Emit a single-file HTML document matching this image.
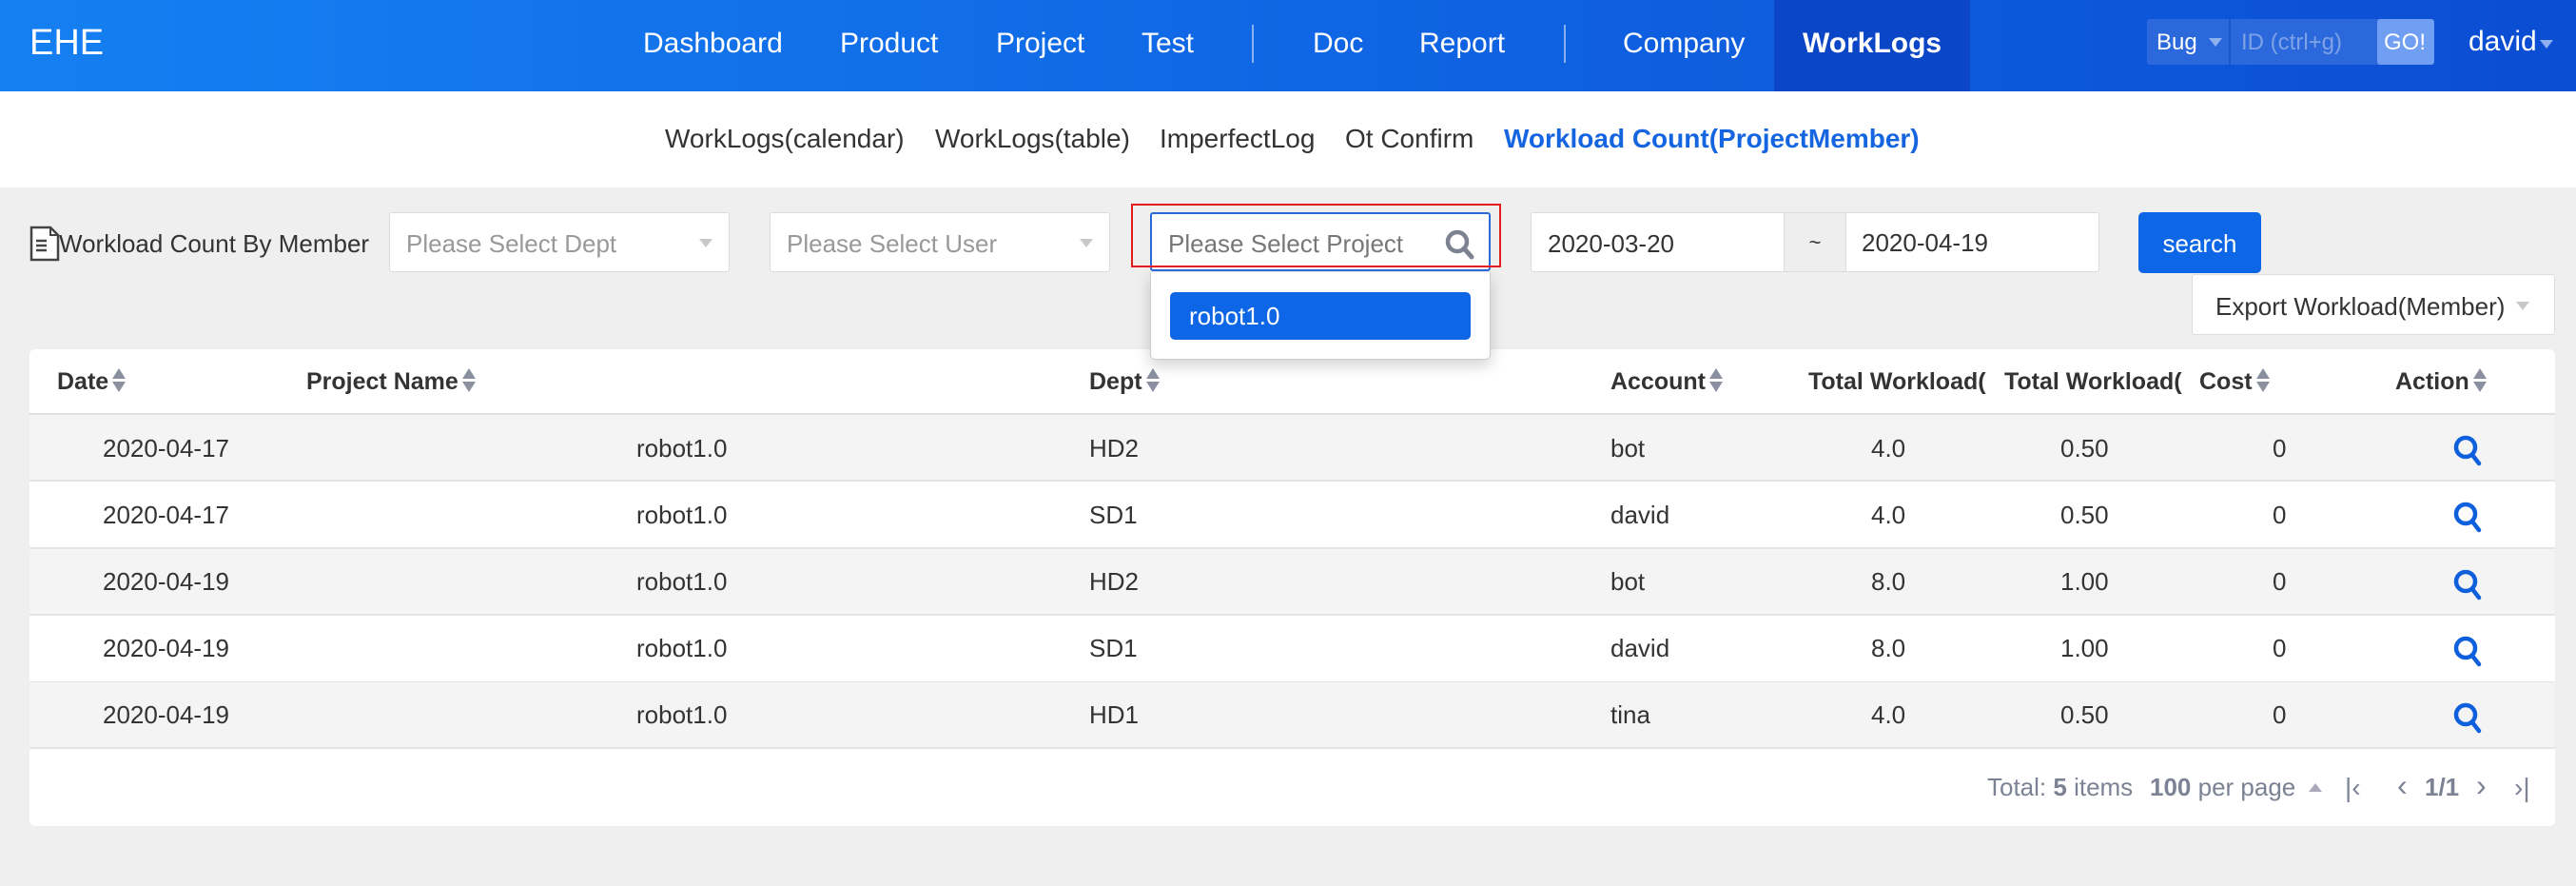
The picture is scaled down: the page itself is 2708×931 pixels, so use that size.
<!DOCTYPE html>
<html><head><meta charset="utf-8"><style>
*{margin:0;padding:0;box-sizing:border-box}
body{width:2708px;height:931px;background:#efefef;font-family:"Liberation Sans",Arial,sans-serif;position:relative;overflow:hidden;color:#333}
.a{position:absolute;white-space:nowrap}
.hdr{left:0;top:0;width:2708px;height:96px;background:linear-gradient(90deg,#1580f2 0%,#1069e6 45%,#0b4dd3 100%)}
.nav{color:#fff;font-size:30px;top:29px}
.sub{font-size:28px;color:#333;top:130px}
.sel{background:#fff;border:1px solid #dcdcdc;border-radius:3px;height:63px;top:223px;font-size:26px;color:#999;padding:17px 0 0 17px}
.caret{position:absolute;width:0;height:0;border-left:7px solid transparent;border-right:7px solid transparent;border-top:9px solid #c8c8c8}
.th{font-size:25px;font-weight:bold;color:#333;top:387px}
.td{font-size:26px;color:#333}
.sort{display:inline-block;vertical-align:middle;margin-left:3px;width:16px;height:26px;position:relative;top:-2px}
.sort:before{content:"";position:absolute;left:1px;top:0;border-left:7px solid transparent;border-right:7px solid transparent;border-bottom:11px solid #8a90a0}
.sort:after{content:"";position:absolute;left:1px;top:14px;border-left:7px solid transparent;border-right:7px solid transparent;border-top:11px solid #8a90a0}
.row{left:31px;width:2655px;height:70px;border-bottom:2px solid #e4e4e4}
.pg{font-size:26px;color:#7b8294;top:812px}
</style></head><body>
<div class="a hdr"></div>
<div class="a" style="left:1865px;top:0;width:206px;height:96px;background:#0b46c6"></div>
<div class="a" style="left:31px;top:24px;color:#fff;font-size:38px">EHE</div>
<div class="a nav" style="left:676px">Dashboard</div>
<div class="a nav" style="left:883px">Product</div>
<div class="a nav" style="left:1047px">Project</div>
<div class="a nav" style="left:1200px">Test</div>
<div class="a" style="left:1316px;top:26px;width:2px;height:40px;background:rgba(255,255,255,.5)"></div>
<div class="a nav" style="left:1380px">Doc</div>
<div class="a nav" style="left:1492px">Report</div>
<div class="a" style="left:1644px;top:26px;width:2px;height:40px;background:rgba(255,255,255,.5)"></div>
<div class="a nav" style="left:1706px">Company</div>
<div class="a nav" style="left:1895px;font-weight:bold">WorkLogs</div>
<div class="a" style="left:2257px;top:20px;width:302px;height:48px;background:#2a68db;border-radius:3px"></div>
<div class="a" style="left:2343px;top:20px;width:2px;height:48px;background:#1a55cc"></div>
<div class="a" style="left:2499px;top:20px;width:60px;height:48px;background:#6f9ef2;border-radius:3px"></div>
<div class="a" style="left:2267px;top:31px;color:#fff;font-size:24px">Bug</div>
<div class="caret" style="left:2322px;top:40px;border-top-color:#8fb0ee"></div>
<div class="a" style="left:2356px;top:31px;color:#7ea2e6;font-size:24px">ID (ctrl+g)</div>
<div class="a" style="left:2506px;top:31px;color:#fff;font-size:24px">GO!</div>
<div class="a" style="left:2595px;top:27px;color:#fff;font-size:30px">david</div>
<div class="caret" style="left:2670px;top:42px;border-top-color:#8fb0ee"></div>
<div class="a" style="left:0;top:96px;width:2708px;height:101px;background:#fff"></div>
<div class="a sub" style="left:699px">WorkLogs(calendar)</div>
<div class="a sub" style="left:983px">WorkLogs(table)</div>
<div class="a sub" style="left:1219px">ImperfectLog</div>
<div class="a sub" style="left:1414px">Ot Confirm</div>
<div class="a sub" style="left:1581px;color:#1565e0;font-weight:bold">Workload Count(ProjectMember)</div>
<svg class="a" style="left:31px;top:237px" width="32" height="38" viewBox="0 0 32 38"><path d="M2 2h20l8 8v26H2z" fill="#fff" stroke="#444" stroke-width="2.5"/><path d="M22 2v8h8" fill="none" stroke="#444" stroke-width="2"/><path d="M7 16h11M7 21h11M7 26h11" stroke="#444" stroke-width="2.5"/></svg>
<div class="a" style="left:62px;top:241px;font-size:26px;color:#333">Workload Count By Member</div>
<div class="a sel" style="left:409px;width:358px">Please Select Dept<div class="caret" style="left:325px;top:27px"></div></div>
<div class="a sel" style="left:809px;width:358px">Please Select User<div class="caret" style="left:325px;top:27px"></div></div>
<div class="a sel" style="left:1609px;width:598px;color:#333">2020-03-20</div>
<div class="a" style="left:1875px;top:224px;width:66px;height:61px;background:#eee;border-left:1px solid #ddd;border-right:1px solid #ddd;font-size:22px;text-align:center;padding-top:18px">~</div>
<div class="a" style="left:1957px;top:240px;font-size:26px">2020-04-19</div>
<div class="a" style="left:2248px;top:223px;width:129px;height:64px;background:#0d66e6;border-radius:5px;color:#fff;font-size:26px;text-align:center;padding-top:18px">search</div>
<div class="a" style="left:2304px;top:288px;width:382px;height:64px;background:#fff;border:1px solid #ddd;border-radius:3px;font-size:26px;color:#333;padding:18px 0 0 24px">Export Workload(Member)<div class="caret" style="left:340px;top:28px"></div></div>
<div class="a" style="left:31px;top:367px;width:2655px;height:501px;background:#fff;border-radius:6px"></div>
<div class="a" style="left:31px;top:434px;width:2655px;height:2px;background:#e0e0e0"></div>
<div class="a th" style="left:60px">Date<span class="sort"></span></div>
<div class="a th" style="left:322px">Project Name<span class="sort"></span></div>
<div class="a th" style="left:1145px">Dept<span class="sort"></span></div>
<div class="a th" style="left:1693px">Account<span class="sort"></span></div>
<div class="a th" style="left:1901px;width:195px;overflow:hidden">Total Workload(</div>
<div class="a th" style="left:2107px;width:195px;overflow:hidden">Total Workload(</div>
<div class="a th" style="left:2312px">Cost<span class="sort"></span></div>
<div class="a th" style="left:2518px">Action<span class="sort"></span></div>
<div class="a row" style="top:436px;background:#f4f4f4"></div>
<div class="a row" style="top:507px;background:#fff"></div>
<div class="a row" style="top:577px;background:#f4f4f4"></div>
<div class="a row" style="top:648px;background:#fff"></div>
<div class="a row" style="top:717px;background:#f4f4f4"></div>
<div class="a td" style="left:108px;line-height:70px;top:436px">2020-04-17<br>2020-04-17<br>2020-04-19<br>2020-04-19<br>2020-04-19</div>
<div class="a td" style="left:669px;top:436px;line-height:70px">robot1.0<br>robot1.0<br>robot1.0<br>robot1.0<br>robot1.0</div>
<div class="a td" style="left:1145px;top:436px;line-height:70px">HD2<br>SD1<br>HD2<br>SD1<br>HD1</div>
<div class="a td" style="left:1693px;top:436px;line-height:70px">bot<br>david<br>bot<br>david<br>tina</div>
<div class="a td" style="left:1967px;top:436px;line-height:70px">4.0<br>4.0<br>8.0<br>8.0<br>4.0</div>
<div class="a td" style="left:2166px;top:436px;line-height:70px">0.50<br>0.50<br>1.00<br>1.00<br>0.50</div>
<div class="a td" style="left:2389px;top:436px;line-height:70px">0<br>0<br>0<br>0<br>0</div>
<svg class="a" style="left:2578px;top:456px" width="34" height="320" viewBox="0 0 34 320">
<g fill="none" stroke="#0d5fdc" stroke-width="4.5" stroke-linecap="round">
<circle cx="14" cy="14" r="10"/><path d="M21 22l7 9"/>
<circle cx="14" cy="84" r="10"/><path d="M21 92l7 9"/>
<circle cx="14" cy="155" r="10"/><path d="M21 163l7 9"/>
<circle cx="14" cy="225" r="10"/><path d="M21 233l7 9"/>
<circle cx="14" cy="295" r="10"/><path d="M21 303l7 9"/>
</g></svg>
<div class="a pg" style="left:2089px">Total: <b>5</b> items</div>
<div class="a pg" style="left:2260px"><b>100</b> per page</div>
<div class="a" style="left:2427px;top:823px;border-left:7px solid transparent;border-right:7px solid transparent;border-bottom:9px solid #aab"></div>
<div class="a pg" style="left:2465px;font-size:28px">|&lsaquo;</div>
<div class="a pg" style="left:2520px;font-size:32px;top:807px">&lsaquo;</div>
<div class="a pg" style="left:2549px;font-weight:bold">1/1</div>
<div class="a pg" style="left:2603px;font-size:32px;top:807px">&rsaquo;</div>
<div class="a pg" style="left:2643px;font-size:28px">&rsaquo;|</div>
<div class="a" style="left:1209px;top:286px;width:358px;height:92px;background:#fff;border:1px solid #ccc;border-top:none;border-radius:0 0 5px 5px;box-shadow:0 6px 16px rgba(0,0,0,.18)"></div>
<div class="a" style="left:1230px;top:307px;width:316px;height:50px;background:#0d66e6;border-radius:5px;color:#fff;font-size:26px;padding:10px 0 0 20px">robot1.0</div>
<div class="a sel" style="left:1209px;width:358px;height:62px;border:2px solid #2a6ad8;color:#777;padding-top:16px">Please Select Project</div>
<svg class="a" style="left:1518px;top:240px" width="34" height="34" viewBox="0 0 34 34"><circle cx="14" cy="14" r="10" fill="none" stroke="#7d8290" stroke-width="4.5"/><path d="M21 21l8 9" stroke="#7d8290" stroke-width="5" stroke-linecap="round"/></svg>
<div class="a" style="left:1189px;top:214px;width:389px;height:67px;border:2px solid #e41d1d"></div>
</body></html>
